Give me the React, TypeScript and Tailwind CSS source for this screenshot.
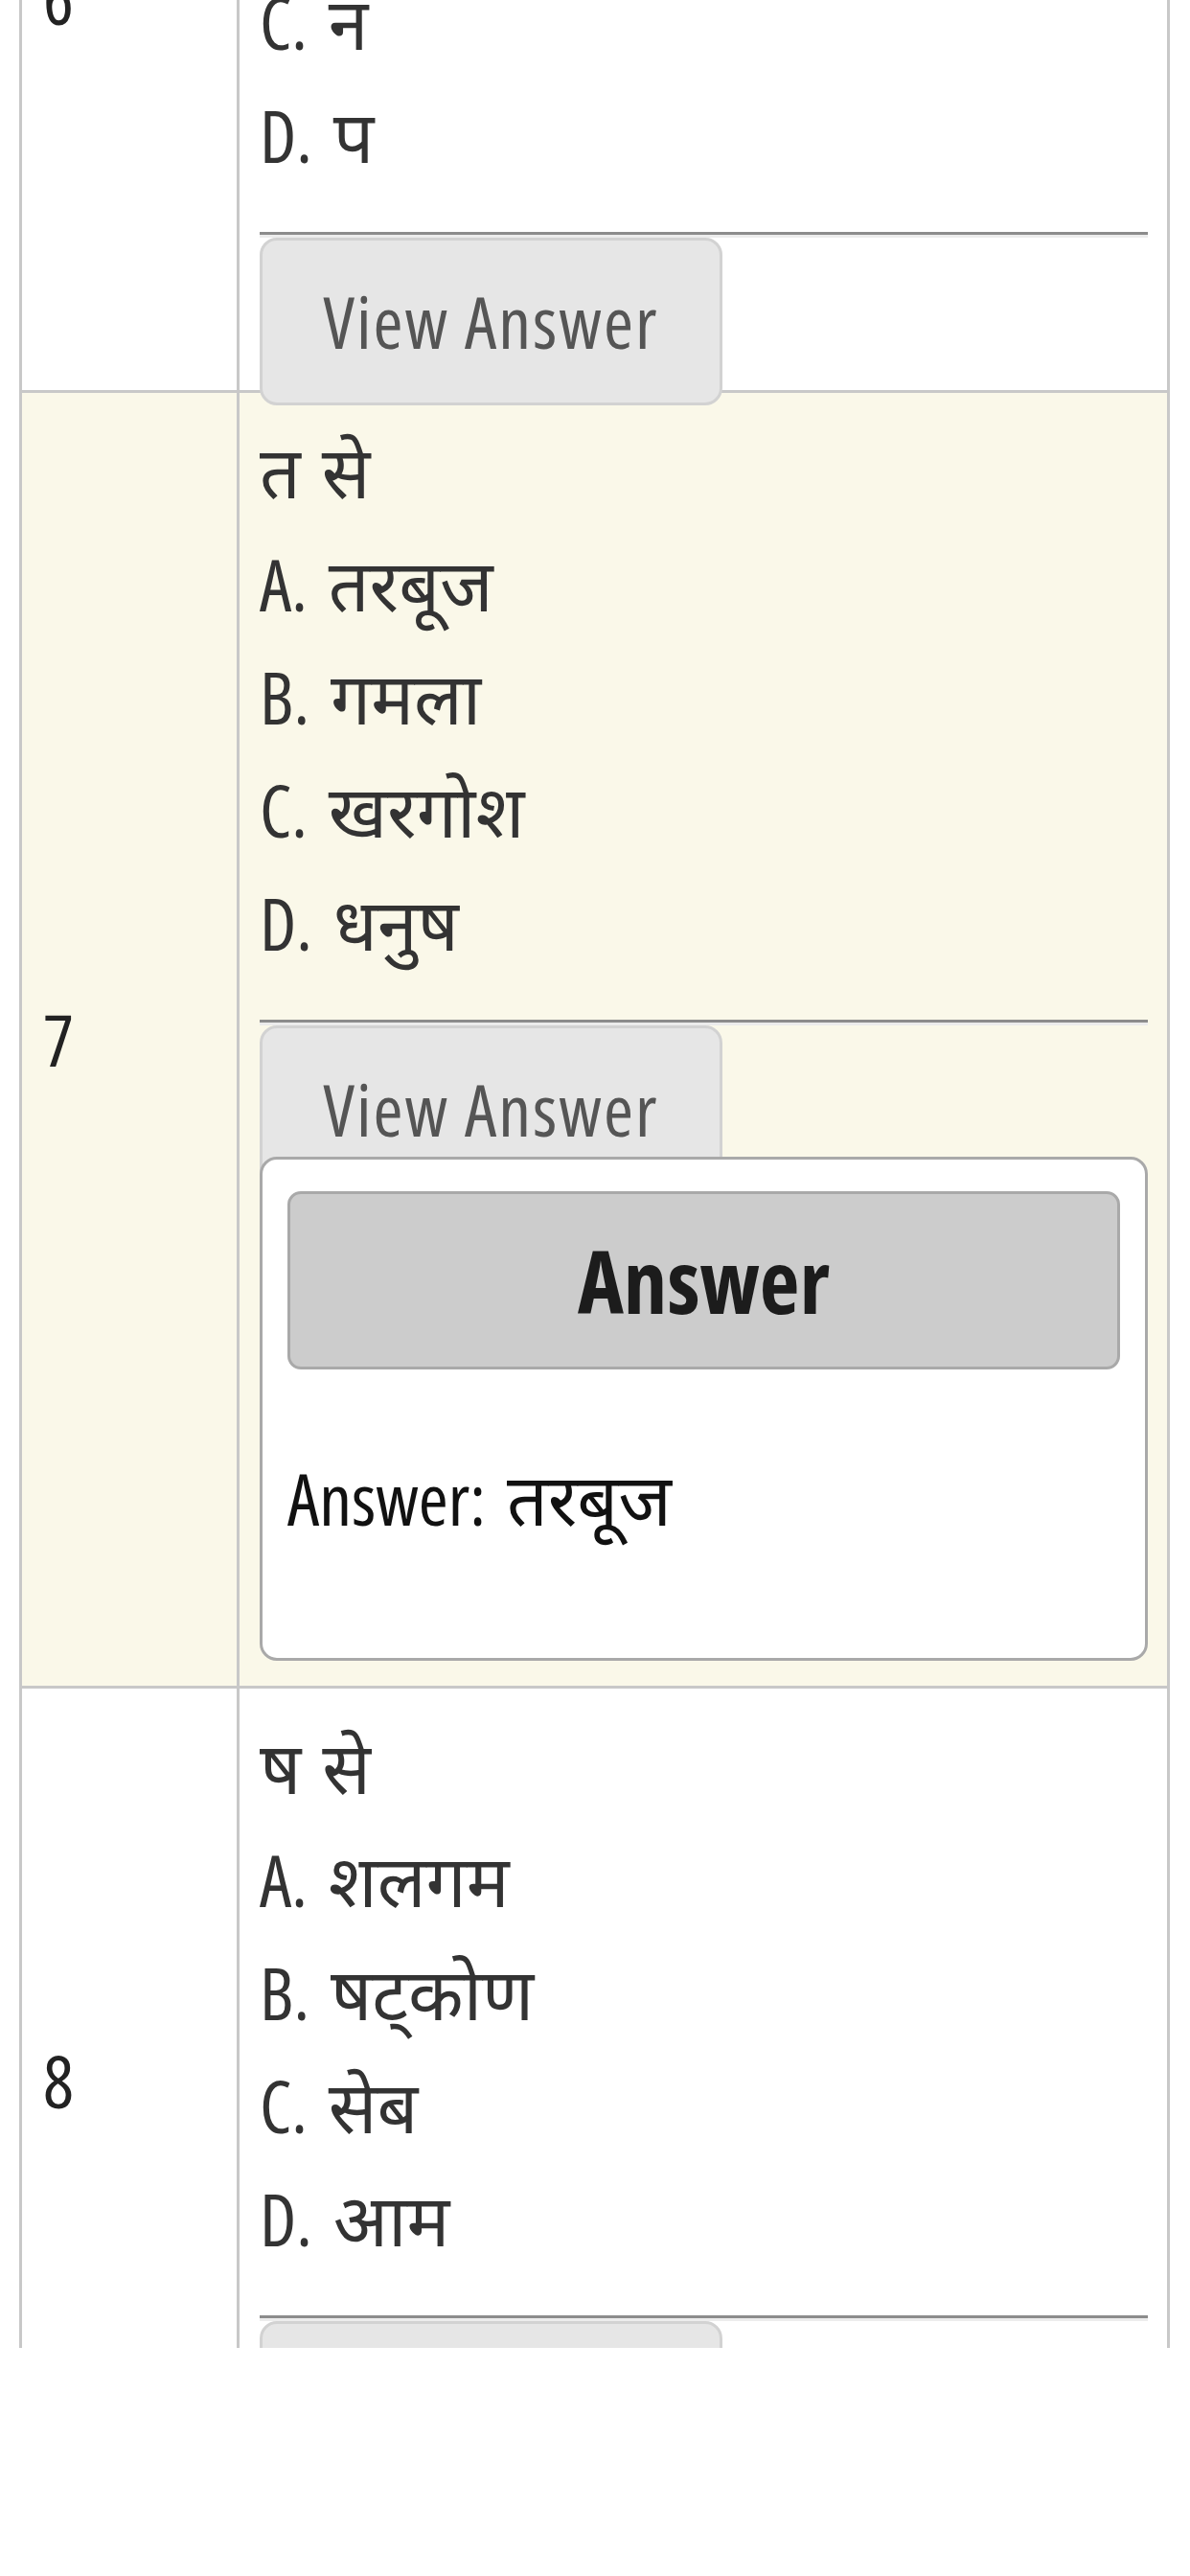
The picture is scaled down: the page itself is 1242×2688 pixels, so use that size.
import React from "react";

type Question = {
  no: number;
  prompt: string;
  options: string[];
  answer?: string;
  shaded?: boolean;
};

const questions: Question[] = [
  { no: 6, prompt: "न से", options: ["म", "ल", "न", "प"] },
  { no: 7, prompt: "त से", options: ["तरबूज", "गमला", "खरगोश", "धनुष"], answer: "तरबूज", shaded: true },
  { no: 8, prompt: "ष से", options: ["शलगम", "षट्कोण", "सेब", "आम"] },
];

const letters = ["A", "B", "C", "D"];

function AnswerBox({ answer }: { answer: string }) {
  return (
    <div className="relative z-10 h-[526px] rounded-[18px] border-[3px] border-[#a9a9a9] bg-white px-[26px] pt-[33px]">
      <div className="flex h-[186px] items-center justify-center rounded-[14px] border-[3px] border-[#a9a9a9] bg-[#cccccc] text-[91px] font-bold text-[#1c1c1c]">
        Answer
      </div>
      <div className="mt-[75px] h-[118px] leading-[118px] text-[#111111]">Answer: {answer}</div>
    </div>
  );
}

function Row({ q }: { q: Question }) {
  return (
    <div className={`flex border-b-[3px] border-[#c8c8c8] ${q.shaded ? "bg-[#faf8e9]" : "bg-white"}`}>
      <div className="flex w-[227px] shrink-0 items-center border-r-[3px] border-[#c8c8c8] pl-[22px] text-[#222222]">
        {q.no}
      </div>
      <div className={`flex-1 pl-[21px] pr-[20px] pt-[22px] ${q.answer ? "pb-[26px]" : ""}`}>
        <div className="h-[118px] leading-[118px]">{q.prompt}</div>
        {q.options.map((opt, i) => (
          <div key={i} className="h-[118px] leading-[118px]">
            {letters[i]}. {opt}
          </div>
        ))}
        <hr className="mt-[42px] border-t-[3px] border-b-[3px] border-t-[#8c8c8c] border-b-[#ececec]" />
        <button
          className={`relative z-10 flex h-[175px] w-[483px] items-center justify-center rounded-[18px] border-[3px] border-[#d2d2d2] bg-[#e6e6e6] tracking-[2px] text-[#555555] [word-spacing:0px] ${
            q.answer ? "-mb-[38px]" : "-mb-[16px]"
          }`}
        >
          View Answer
        </button>
        {q.answer && <AnswerBox answer={q.answer} />}
      </div>
    </div>
  );
}

export default function App() {
  return (
    <div
      className="h-[2688px] bg-white text-[75px] text-[#333333] [word-spacing:8px]"
      style={{
        fontFamily: '"Liberation Sans Narrow", "Open Sans", "Noto Sans", "Noto Sans Devanagari", sans-serif',
        fontStretch: "85%",
      }}
    >
      <div className="h-[2450px] overflow-hidden">
        <div className="-mt-[412px] ml-[20px] w-[1201px] border-x-[3px] border-[#c8c8c8]">
          {questions.map((q) => (
            <Row key={q.no} q={q} />
          ))}
        </div>
      </div>
    </div>
  );
}
